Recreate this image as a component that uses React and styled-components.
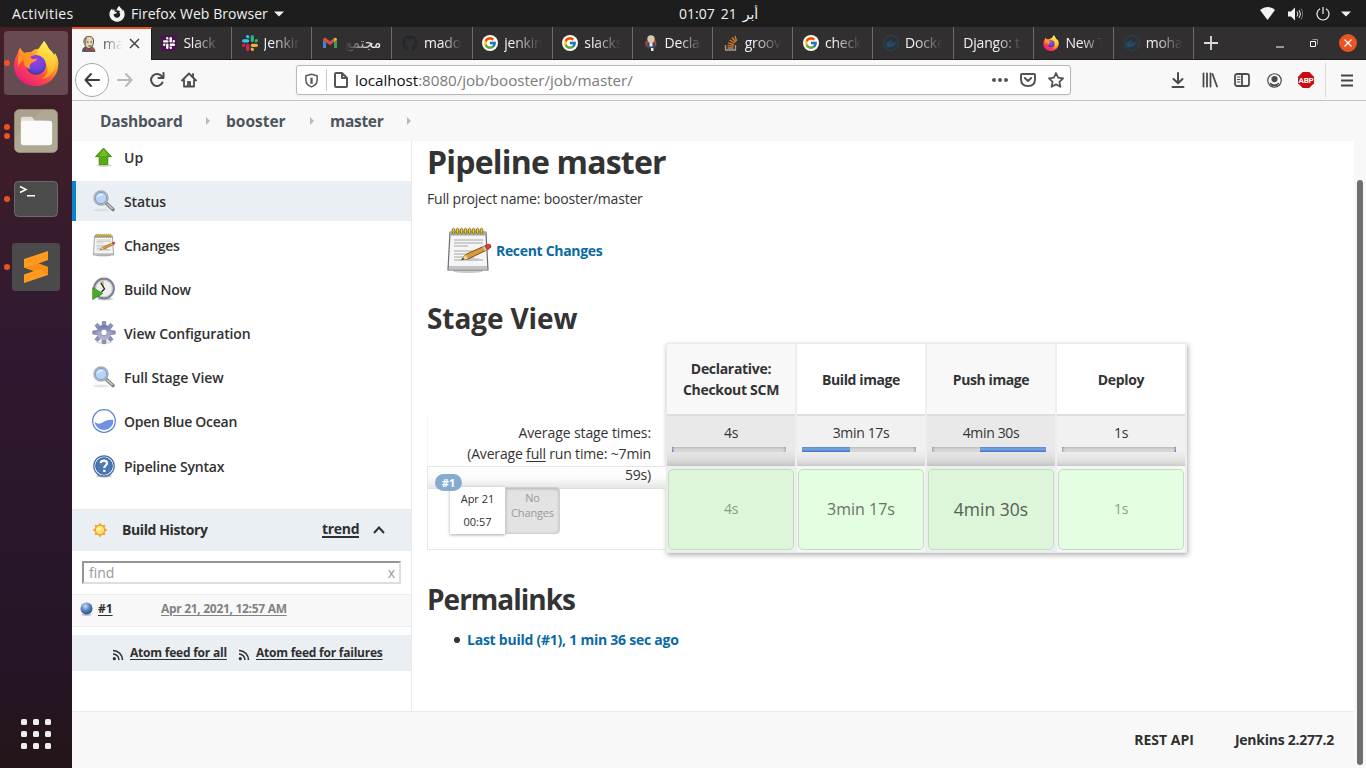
import React from "react";
import styled, { createGlobalStyle, css } from "styled-components";
import { FaFirefoxBrowser, FaGithub, FaDocker } from "react-icons/fa";
import { FcGoogle } from "react-icons/fc";

const GlobalStyle = createGlobalStyle`
  * { box-sizing: border-box; }
  body { margin: 0; background: #fff; font-family: "Open Sans", "Noto Sans", "DejaVu Sans", sans-serif; font-size: 14px; color: #333; }
  h1, h2, p, ul { margin: 0; padding: 0; }
  a { color: inherit; text-decoration: none; }
  svg { display: block; flex: none; }
`;

/* Letter spacing is tuned per label */
const tracking = css`
  letter-spacing: ${(p) => p.$ls || 0}px;
  white-space: nowrap;
`;

const Screen = styled.div`
  width: 1366px;
  height: 768px;
  overflow: hidden;
  display: flex;
  flex-direction: column;
`;

/* ---------- System bar ---------- */
const TopBar = styled.header`
  height: 27px;
  flex: none;
  background: #1d1d1d;
  color: #f2f2f2;
  display: grid;
  grid-template-columns: 679px 1fr auto;
  align-items: center;
  line-height: 26px;
`;
const TopLeft = styled.div`
  display: flex;
  align-items: center;
  padding-left: 12px;
`;
const TopLabel = styled.span`
  ${tracking}
  width: ${(p) => p.$w}px;
`;
const AppMenu = styled.div`
  display: flex;
  align-items: center;
  gap: 6px;
  margin-left: 35px;
`;
const Clock = styled.div`
  display: flex;
  gap: 6px;
`;
const Tray = styled.div`
  display: flex;
  align-items: center;
  gap: 13px;
  padding-right: 15px;
  svg:last-child { margin-left: -2px; }
`;

/* ---------- Dock ---------- */
const Desktop = styled.div`
  display: flex;
  flex: 1;
  min-height: 0;
`;
const DockBar = styled.nav`
  width: 72px;
  flex: none;
  background: linear-gradient(180deg, #431f26 0%, #3a1c2b 22%, #301930 42%, #29162b 70%, #251524 88%, #241519 100%);
  display: flex;
  flex-direction: column;
  gap: 4px;
  padding: 4px 4px 19px;
`;
const DockSlot = styled.div`
  height: 64px;
  display: grid;
  grid-template-columns: 6px 1fr 6px;
  align-items: center;
  justify-items: center;
  border-radius: 4px;
  background: ${(p) => (p.$active ? "rgba(255,255,255,0.2)" : "transparent")};
`;
const Dots = styled.div`
  display: flex;
  flex-direction: column;
  gap: 3px;
`;
const Dot = styled.i`
  width: 6px;
  height: 6px;
  border-radius: 50%;
  background: #e95420;
`;
const AppGrid = styled.div`
  margin-top: auto;
  align-self: center;
  display: grid;
  grid-template-columns: repeat(3, 6px);
  gap: 6px;
  i { width: 6px; height: 6px; border-radius: 1.5px; background: #eeeeec; }
`;

/* ---------- Browser ---------- */
const Browser = styled.div`
  flex: 1;
  min-width: 0;
  display: flex;
  flex-direction: column;
`;
const TabStrip = styled.div`
  height: 33px;
  flex: none;
  background: #322f30;
  border-bottom: 1px solid #1c1b1b;
  display: flex;
`;
const Tab = styled.div`
  width: ${(p) => (p.$active ? 79.8 : 80.2)}px;
  height: ${(p) => (p.$active ? 33 : 32)}px;
  flex: none;
  display: flex;
  align-items: center;
  padding: ${(p) => (p.$active ? "0 11px 2px 9px" : "0 10px 0 9.6px")};
  gap: 6px;
  background: ${(p) => (p.$active ? "#f8f8f8" : "transparent")};
  border-top: ${(p) => (p.$active ? "2px solid #e95420" : "0")};
  border-right: 1px solid ${(p) => (p.$active ? "#1c1b1b" : "#6d6b6c")};
  color: ${(p) => (p.$active ? "#4a4a4a" : "#f4f4f4")};
`;
const TabTitle = styled.span`
  ${tracking}
  flex: 1;
  min-width: 0;
  overflow: hidden;
  line-height: 24px;
  direction: ${(p) => (p.$rtl ? "rtl" : "ltr")};
  mask-image: linear-gradient(${(p) => (p.$rtl ? "270deg" : "90deg")}, #000 ${(p) => p.$solid || 25}%, transparent 98%);
`;
const NewTab = styled.div`
  width: 33px;
  display: grid;
  place-items: center;
`;
const WindowButtons = styled.div`
  margin-left: auto;
  display: flex;
  align-items: center;
  gap: 26px;
  padding-right: 9px;
  svg:last-child { margin-left: -5px; }
`;
const Toolbar = styled.div`
  height: 41px;
  flex: none;
  background: #f8f8f8;
  border-bottom: 1px solid #c3c3c3;
  display: flex;
  align-items: center;
  padding-left: 3px;
`;
const BackButton = styled.div`
  width: 34px;
  height: 34px;
  border-radius: 50%;
  border: 1px solid #aaa;
  background: #fff;
  display: grid;
  place-items: center;
`;
const ToolSlot = styled.div`
  width: 32px;
  height: 32px;
  display: grid;
  place-items: center;
  color: #4b4b4b;
`;
const ToolDivider = styled.i`
  width: 1px;
  height: 34px;
  margin: 0 5px 0 3px;
  background: #d9d9d9;
`;
const UrlBar = styled.div`
  width: 775px;
  height: 30px;
  margin: 0 91px;
  border: 1px solid #b8b8b8;
  border-radius: 3px;
  background: #fff;
  box-shadow: 0 1px 3px rgba(0, 0, 0, 0.06);
  display: flex;
  align-items: center;
  padding: 0 6px 0 7px;
`;
const UrlDivider = styled.i`
  width: 1px;
  height: 22px;
  margin: 0 6px 0 7px;
  background: #c8c8c8;
`;
const UrlText = styled.span`
  ${tracking}
  flex: 1;
  margin-left: 6px;
  font-size: 15.2px;
  color: #7b7b7b;
  b { font-weight: 400; color: #111; }
`;
const UrlActions = styled.div`
  display: flex;
  align-items: center;
  gap: 12px;
`;

/* ---------- Jenkins page ---------- */
const Page = styled.div`
  flex: 1;
  min-height: 0;
  display: flex;
  background: #f8f8f8;
`;
const PageColumn = styled.div`
  width: 1282px;
  display: flex;
  flex-direction: column;
`;
const ScrollTrack = styled.div`
  width: 12px;
  padding: 79px 3px 3px;
`;
const ScrollThumb = styled.div`
  height: 585px;
  width: 6px;
  border-radius: 3px;
  background: #6f6f6f;
`;
const Breadcrumbs = styled.div`
  height: 40px;
  flex: none;
  display: flex;
  align-items: center;
  padding-left: 28px;
`;
const Crumb = styled.a`
  ${tracking}
  width: ${(p) => p.$w}px;
  font-size: 15.5px;
  font-weight: 700;
  color: #4d545d;
`;
const CrumbArrow = styled.i`
  width: 0;
  height: 0;
  border: 4px solid transparent;
  border-left-color: #b9b9b9;
  border-right: 0;
  margin-right: ${(p) => p.$mr}px;
`;
const Body = styled.div`
  height: 570px;
  flex: none;
  display: flex;
  background: #fff;
`;
const Side = styled.aside`
  width: 340px;
  flex: none;
  border-right: 1px solid #eaeaea;
  overflow: hidden;
`;
const Tasks = styled.nav`
  margin-top: -4px;
  height: 372px;
  display: flex;
  flex-direction: column;
  gap: 4px;
`;
const Task = styled.a`
  ${tracking}
  height: 40px;
  flex: none;
  display: flex;
  align-items: center;
  gap: 8px;
  padding-left: 16px;
  border-left: 4px solid ${(p) => (p.$active ? "#0b84d0" : "transparent")};
  background: ${(p) => (p.$active ? "#e9eff2" : "transparent")};
  font-weight: 600;
  color: #303030;
  &:last-child { height: 42px; }
`;
const HistoryHead = styled.div`
  height: 42px;
  display: flex;
  align-items: center;
  padding: 0 0 3px 19px;
  background: #e9eff2;
  border-top: 1px solid #eaeaea;
  font-weight: 700;
  color: #303030;
  svg { margin-top: 1px; }
`;
const HistoryTitle = styled.span`
  ${tracking}
  width: 200px;
  margin-left: 13px;
`;
const Trend = styled.a`
  ${tracking}
  width: 37px;
  margin-right: 14px;
  border-bottom: 2px solid #303030;
  line-height: 15px;
  font-weight: 700;
`;
const Find = styled.div`
  height: 23px;
  margin: 10px;
  border: 2px solid;
  border-color: #959595 #dedede #dedede #959595;
  display: flex;
  align-items: center;
  justify-content: space-between;
  padding: 0 4px 1px 5px;
  color: #989898;
`;
const FindText = styled.span`
  ${tracking}
`;
const BuildRow = styled.div`
  height: 33px;
  display: flex;
  align-items: center;
  padding: 0 0 4px 8px;
  background: #f8f8f8;
  border: solid #e9eff2;
  border-width: 1px 0;
  font-size: 12px;
  font-weight: 700;
`;
const BuildLink = styled.a`
  ${tracking}
  width: ${(p) => (p.$w ? `${p.$w}px` : "auto")};
  margin-left: 5px;
  color: ${(p) => (p.$muted ? "#828282" : "#303030")};
  text-decoration: underline;
  text-underline-offset: 2px;
`;
const Feeds = styled.div`
  height: 36px;
  margin-top: 8px;
  display: flex;
  align-items: center;
  padding-left: 40px;
  background: #e9eff2;
  font-size: 12px;
  font-weight: 700;
  svg { margin-top: 3px; }
`;
const FeedLink = styled(BuildLink)`
  margin: 0 10px 1px 6px;
`;

const Main = styled.main`
  flex: 1;
  padding: 3px 0 0 15px;
`;
const Title = styled.h1`
  ${tracking}
  font-size: 32px;
  line-height: 36px;
  font-weight: 700;
`;
const Para = styled.p`
  ${tracking}
  margin-top: 9px;
  line-height: 20px;
`;
const Recent = styled.div`
  margin: 17px 0 0 18px;
  height: 48px;
  display: flex;
  align-items: center;
  gap: 3px;
`;
const BlueLink = styled.a`
  ${tracking}
  font-weight: 700;
  color: #0b6aa2;
`;
const Heading = styled.h2`
  ${tracking}
  margin-top: ${(p) => p.$mt}px;
  font-size: 28px;
  line-height: 34px;
  font-weight: 700;
`;
const StageView = styled.section`
  margin-top: 8px;
  height: 210px;
  display: flex;
`;
const RunColumn = styled.div`
  width: 239px;
  padding-top: 72px;
`;
const Averages = styled.div`
  position: relative;
  z-index: 1;
  height: 51px;
  padding: 7px 15px 0 0;
  text-align: right;
  line-height: 21px;
  border-left: 1px solid #f6f6f6;
  u { text-underline-offset: 2px; }
`;
const Line = styled.div`
  ${tracking}
`;
const RunCell = styled.div`
  position: relative;
  height: 84px;
  border: 1px solid #e6e6e6;
  border-right: 0;
  padding: 20px 0 0 22px;
  display: flex;
  background: linear-gradient(180deg, #fff 0, #fbfbfb 11px, #e6e6e6 21px, #d8d8d8 22px, transparent 22px);
`;
const RunBadge = styled.span`
  position: absolute;
  z-index: 2;
  left: 7px;
  top: 7px;
  width: 27px;
  height: 17px;
  border-radius: 9px;
  background: #86abd0;
  color: #fff;
  font-size: 11px;
  font-weight: 700;
  line-height: 17px;
  text-align: center;
`;
const RunDate = styled.div`
  width: 55px;
  height: 47px;
  background: #fff;
  box-shadow: 0 1px 3px rgba(0, 0, 0, 0.35);
  font-size: 11px;
  line-height: 23px;
  text-align: center;
  color: #303030;
`;
const RunChanges = styled.div`
  ${tracking}
  width: 55px;
  height: 47px;
  border: 1px solid #cfcfcf;
  border-radius: 0 4px 4px 0;
  background: #e3e3e3;
  box-shadow: inset 0 1px 3px rgba(0, 0, 0, 0.22);
  font-size: 11px;
  line-height: 15px;
  padding-top: 2px;
  text-align: center;
  color: #999;
`;
const Stages = styled.div`
  width: 521px;
  height: 210px;
  border: 1px solid #e8ebec;
  border-right: 0;
  background: #efefef;
  box-shadow: 1px 2px 5px rgba(0, 0, 0, 0.32);
  display: grid;
  grid-template-columns: repeat(4, 130px);
`;
const Stage = styled.div`
  display: flex;
  flex-direction: column;
  border-right: 2px solid #eee;
`;
const StageName = styled.div`
  height: 72px;
  border-bottom: 2px solid #dedede;
  background: ${(p) => (p.$odd ? "#f8f8f8" : "#fff")};
  display: grid;
  place-content: center;
  text-align: center;
  line-height: 21px;
  font-weight: 700;
`;
const StageAverage = styled.div`
  height: 50px;
  background: linear-gradient(180deg, transparent 34px, rgba(0, 0, 0, 0.06) 44px, rgba(0, 0, 0, 0.16) 50px), ${(p) => (p.$odd ? "#e9e9e9" : "#f1f1f1")};
  padding: 7px 9px 0 5px;
  text-align: center;
`;
const StageTime = styled.div`
  ${tracking}
  line-height: 20px;
  padding-left: 4px;
`;
const Meter = styled.div`
  display: flex;
  height: 5px;
  margin-top: 4px;
  background: linear-gradient(90deg, rgba(0,0,0,0.2), transparent 3px, transparent 111px, rgba(0,0,0,0.2)), linear-gradient(180deg, #bcbcbc, #d6d6d6 50%);
`;
const MeterFill = styled.i`
  height: 5px;
  background: linear-gradient(180deg, #5f87cb, #7ba7dc 45%, #3d6fc9);
`;
const StageResult = styled.div`
  flex: 1;
  padding: 3px 1px 2px;
  background: ${(p) => (p.$odd ? "#e9f2e9" : "#f1f9f1")};
`;
const StageBox = styled.div`
  ${tracking}
  height: 81px;
  border: 1px solid #c9d6cc;
  border-radius: 5px;
  background: ${(p) => (p.$odd ? "#ddf6da" : "#e3fee1")};
  display: grid;
  place-content: center;
  padding-bottom: 2px;
  font-size: ${(p) => p.$size}px;
  color: ${(p) => p.$tone};
`;
const Links = styled.ul`
  list-style: none;
  margin: 14px 0 0 27px;
  li { display: flex; align-items: center; gap: 7px; line-height: 20px; }
  li::before { content: ""; width: 6px; height: 6px; border-radius: 50%; background: #333; }
`;
const Footer = styled.footer`
  flex: 1;
  border-top: 1px solid #eaeaea;
  display: flex;
  justify-content: flex-end;
  gap: 41px;
  padding: 18px 20px 0 0;
  font-weight: 700;
  line-height: 20px;
  color: #303030;
`;
const FooterLink = styled.a`
  ${tracking}
`;

/* ---------- Icons ---------- */
const Firefox = ({ size, id }) => (
  <svg width={size} height={size} viewBox="0 0 46 46">
    <defs>
      <linearGradient id={`${id}a`} x1="0.85" y1="0.1" x2="0.25" y2="0.95">
        <stop offset="0" stopColor="#fff44f" />
        <stop offset=".35" stopColor="#ffa42a" />
        <stop offset=".65" stopColor="#ff4a45" />
        <stop offset="1" stopColor="#e81e7a" />
      </linearGradient>
      <radialGradient id={`${id}b`} cx=".5" cy=".3" r=".75">
        <stop offset="0" stopColor="#a43be8" />
        <stop offset=".55" stopColor="#6b45dd" />
        <stop offset="1" stopColor="#40309c" />
      </radialGradient>
      <linearGradient id={`${id}c`} x1=".6" y1="0" x2=".4" y2="1">
        <stop offset="0" stopColor="#fff25a" />
        <stop offset=".6" stopColor="#ffc52e" />
        <stop offset="1" stopColor="#ff9328" />
      </linearGradient>
    </defs>
    <path fill={`url(#${id}a)`} d="M7 8c1 1 2 3 4 5 3-1 5-1 7-1 3-3 7-4 10-3 1-4 3-7 3-8 3 3 4 7 6 9 2 1 3 3 4 5l1-2c3 5 4 9 3 14-1 11-11 19-22 19C10 46 1 37 1 25c0-5 2-9 4-12 0-2 1-4 2-5z" />
    <path fill={`url(#${id}c)`} d="M31 1c3 3 4 7 6 9 4 4 7 10 5 17-2 8-8 12-14 12 7-3 8-10 5-15-2-4-7-5-9-8-1-6 4-10 7-15z" />
    <circle fill={`url(#${id}b)`} cx="23" cy="25" r="10" />
    <path fill="#ff9425" d="M7 8c1 1 2 3 4 5 3-1 6-1 8 0-2 2-2 4-1 5 2 2 6 0 6 1-1 3-6 3-7 6-1 2 0 3 0 4-4-1-7-5-6-9-3 1-5 4-6 7 0-6 0-12 2-19z" />
  </svg>
);
const FilesIcon = () => (
  <svg width="44" height="44" viewBox="0 0 45 45">
    <rect x=".5" y=".5" width="44" height="44" rx="5" fill="#a9a18c" stroke="#8e8773" />
    <path d="M1 29 29 1h10q5 0 5 5v33q0 5-5 5H6q-5 0-5-5z" fill="#b4ad9a" opacity=".6" />
    <path d="M7 10q0-2 2-2h8q2 0 3 2l1 2h10v4H7z" fill="#e3dfd4" />
    <rect x="7" y="12" width="32" height="25" rx="2.5" fill="#fafafa" />
  </svg>
);
const TerminalIcon = () => (
  <svg width="44" height="36" viewBox="0 0 44 36">
    <rect x=".5" y=".5" width="43" height="35" rx="4" fill="#4b4b4b" stroke="#6e6a6c" />
    <path d="m6 5.500 6 3-6 3M13 14.700h8" stroke="#fff" strokeWidth="1.500" fill="none" />
  </svg>
);
const SublimeIcon = () => (
  <svg width="48" height="48" viewBox="0 0 48 48">
    <rect width="48" height="48" rx="3" fill="#4a4a4a" />
    <path d="M36 8v9l-9.500 3.500L36 24v8L12 40v-8.500l10-3.500-10-3.500V16z" fill="#ff9a1f" />
    <path d="m22 28 5-1.500L36 31.500V24l-9.500-3.500L12 24.500z" fill="#f78f17" />
  </svg>
);
const SlackIcon = ({ c = ["#36c5f0", "#2eb67d", "#ecb22e", "#e01e5a"], size = 16 }) => (
  <svg width={size} height={size} viewBox="0 0 16 16">
    <g fill={c[0]}><rect x="0" y="4.2" width="7.2" height="3.2" rx="1.6" /><path d="M7.2 3.2H5.6A1.6 1.6 0 1 1 7.2 1.6z" /></g>
    <g fill={c[1]}><rect x="8.7" y="0" width="3.2" height="7.2" rx="1.6" /><path d="M12.8 7.3V5.7a1.6 1.6 0 1 1 1.6 1.6z" /></g>
    <g fill={c[2]}><rect x="8.8" y="8.7" width="7.2" height="3.2" rx="1.6" /><path d="M8.8 12.8h1.6a1.6 1.6 0 1 1-1.6 1.6z" /></g>
    <g fill={c[3]}><rect x="4.1" y="8.8" width="3.2" height="7.2" rx="1.6" /><path d="M3.2 8.7v1.6a1.6 1.6 0 1 1-1.6-1.6z" /></g>
  </svg>
);
const SlackBox = () => (
  <svg width="16" height="16" viewBox="0 0 16 16">
    <rect width="16" height="16" fill="#4a154b" />
    <svg x="2" y="2" width="12" height="12" viewBox="0 0 16 16"><SlackIcon c={["#fff", "#fff", "#fff", "#fff"]} /></svg>
  </svg>
);
const GmailIcon = () => (
  <svg width="16" height="16" viewBox="0 0 16 16">
    <path d="M1 13V5l3 2v6z" fill="#4a7fd6" />
    <path d="M12 13V7l3-2v8z" fill="#3f9a58" />
    <path d="M1 5c0-2 2-2.6 3-1.800l4 3 4-3V7l-4 3.200L1 5z" fill="#d2503f" />
    <path d="M12 7V3.200C13.500 2.200 15 3.200 15 5z" fill="#e3b12c" />
  </svg>
);
const JenkinsIcon = () => (
  <svg width="16" height="16" viewBox="0 0 16 16">
    <path d="M1.500 15.500c0-3 1-4.500 3.500-4.500h4c3 0 4.500 1 5 4.500z" fill="#4a5866" stroke="#333" strokeWidth=".6" />
    <path d="M3 5c0-3 2.500-5 5.200-4.700C11.500.5 13 3 12.500 6.500c-.3 3-2 6-4.500 6S3.500 9 3 5z" fill="#ecd3b0" stroke="#4a3c33" strokeWidth=".9" />
    <path d="M2.500 7c-.500-3 1-6.300 4-6.800L5.500 4l-.5 5z" fill="#8f8579" />
    <path d="M6 6h1.500M9.500 6H11M7.500 10h3" stroke="#333" strokeWidth="1" />
    <path d="m8 13 5-1.500v3.500zM8 13l-3-1v3z" fill="#c4453b" />
  </svg>
);
const ButlerIcon = () => (
  <svg width="16" height="16" viewBox="0 0 16 16">
    <path d="M2.500 6c-1 4 0 6 3.500 7h5c3-2 3-5 1.500-8z" fill="#9c4638" />
    <circle cx="8" cy="4" r="3.700" fill="#d8c9b0" />
    <path d="M5 8h6l1.500 5-4.500 1-4-1z" fill="#2f4a66" />
    <path d="M6.500 7.500h3v4h-3zM8 13h2.500v3H8z" fill="#e8e8e8" />
  </svg>
);
const StackIcon = () => (
  <svg width="16" height="16" viewBox="0 0 16 16" fill="none" strokeWidth="1.300">
    <path d="M2.500 10v5h10v-5" stroke="#9b9da0" />
    <path d="M4.500 13h6M4.600 10.600l6 .6M5.200 7.800l5.700 1.800M6.700 5l5 3M9 2.500l3.800 4.500M12 1l1.600 5" stroke="#dd7d27" />
  </svg>
);
const Ring = styled.span`
  width: 16px;
  height: 16px;
  flex: none;
  border: 1px solid #1d4a66;
  border-radius: 50%;
  display: grid;
  place-items: center;
  color: #1d5070;
  font-size: 11px;
`;
const GoogleDisc = styled(Ring)`
  background: #fff;
  border: 0;
  font-size: 14px;
`;
const Docker = () => <Ring><FaDocker /></Ring>;
const Google = () => <GoogleDisc><FcGoogle /></GoogleDisc>;

const Stroke = ({ s = 16, w = 2, children, c = "currentColor" }) => (
  <svg width={s} height={s} viewBox="0 0 16 16" fill="none" stroke={c} strokeWidth={w} strokeLinecap="round" strokeLinejoin="round">{children}</svg>
);

const Magnifier = () => (
  <svg width="24" height="24" viewBox="0 0 24 24">
    <ellipse cx="9" cy="21" rx="8" ry="1.500" fill="#d8d8d8" opacity=".7" />
    <path d="m14.500 14.500 6.500 6" stroke="#808080" strokeWidth="3.600" strokeLinecap="round" />
    <path d="m15 15 5.500 5" stroke="#d0d0d0" strokeWidth="1.300" />
    <circle cx="9" cy="9" r="7" fill="#b9d3f3" stroke="#a9acb0" strokeWidth="1.400" />
    <circle cx="9" cy="9" r="5.700" fill="none" stroke="#7b9fd4" strokeWidth="1" />
    <path d="M5 9c0-4 5-5 7-3-3 0-5 1-7 3z" fill="#e5effb" />
  </svg>
);
const Notepad = ({ size = 24 }) => (
  <svg width={size} height={size} viewBox="0 0 48 48">
    <ellipse cx="23" cy="45" rx="15" ry="2" fill="#ccc" />
    <path d="M5 6h36l2 38H3z" fill="#f5f5f5" stroke="#6c6c6c" strokeWidth="1.200" strokeLinejoin="round" />
    <path d="M5 6h36v3.500H5z" fill="#a7a7a2" />
    <path d="M4 41h38M4 43h38" stroke="#b2b2b2" strokeWidth="1.300" />
    <path d="M9 14h29M9 17h29M9 20h14M9 25h19M9 28h12M9 31h20M9 34h8M29 34h9" stroke="#a7a7a7" />
    {[8, 12, 16, 20, 24, 28, 32, 36].map((x) => <ellipse key={x} cx={x + 0.500} cy="5" rx="1.400" ry="2.800" fill="#e5cf38" stroke="#87711a" strokeWidth="1" />)}
    <ellipse cx="26" cy="33.500" rx="10" ry="1.500" fill="#c4c4c4" />
    <path d="m16.500 34 4-5.500 19-8.500 2.500 4-19 9z" fill="#d79b3a" stroke="#7c551c" />
    <path d="m40 19.500 3-1.300q3-.2 3 2.800l-3.500 3z" fill="#e43b32" stroke="#943" />
    <path d="m38.500 20.500 2.500 4" stroke="#ccc" strokeWidth="2" />
    <path d="m16.500 34 4-5.500 2.500 4.500z" fill="#efd3a2" />
    <path d="m16.500 34 1.500-2.300 1.200 1.600z" fill="#222" />
  </svg>
);
const UpArrow = () => (
  <svg width="24" height="24" viewBox="0 0 24 24">
    <ellipse cx="12" cy="20.500" rx="8" ry="1.500" fill="#ccc" opacity=".7" />
    <path d="m11.500 3 8 8.700h-3.700v8H7.200v-8H3.500z" fill="#58aa0e" stroke="#3f8608" strokeWidth=".9" />
    <path d="m11.500 4.500 4.500 6-9 1z" fill="#7cc83a" opacity=".7" />
  </svg>
);
const ClockRun = () => (
  <svg width="24" height="24" viewBox="0 0 24 24">
    <ellipse cx="13" cy="22" rx="8" ry="1.500" fill="#ccc" />
    <circle cx="12" cy="11.500" r="9.800" fill="#efefec" stroke="#7c7d97" strokeWidth="2.200" />
    <circle cx="12" cy="11.500" r="8.300" fill="none" stroke="#c5c6d2" />
    <path d="M12 12V3.500a8.500 8.500 0 0 0-4.500 1.500z" fill="#d8c277" />
    <path d="m9 6 3.500 6-3 3" stroke="#222" strokeWidth="1.300" fill="none" />
    <path d="M.7 10.500v12l10-6z" fill="#4aab2b" stroke="#2f7c16" strokeWidth=".7" />
  </svg>
);
const Gear = () => (
  <svg width="24" height="24" viewBox="0 0 24 24">
    <defs><linearGradient id="gear" x1="0" y1="0" x2="0" y2="1"><stop offset="0" stopColor="#6279a8" /><stop offset=".5" stopColor="#a1a0c6" /><stop offset="1" stopColor="#bdb6d2" /></linearGradient></defs>
    <ellipse cx="12" cy="21.500" rx="8" ry="1.500" fill="#ddd" />
    <g fill="url(#gear)" stroke="#7e80a3" strokeWidth=".8" transform="translate(12 11.500)">
      {[0, 45, 90, 135, 180, 225, 270, 315].map((a) => <path key={a} transform={`rotate(${a})`} d="M-2-7-1.500-11.200H1.500L2-7z" fill="#8d93b8" />)}
      <circle r="7.600" stroke="none" />
      <circle r="3.300" fill="#fff" />
    </g>
  </svg>
);
const Ocean = () => (
  <svg width="24" height="24" viewBox="0 0 24 24">
    <circle cx="12" cy="12" r="11.300" fill="#fff" stroke="#5b80dd" strokeWidth="1.200" />
    <path d="M2.500 12.800c3 2.400 5.500 2.400 8.500.4s6.500-3.200 10.400-2.200A9.500 9.500 0 0 1 2.500 12.800z" fill="#6f92e2" />
  </svg>
);
const Help = () => (
  <svg width="24" height="24" viewBox="0 0 24 24">
    <ellipse cx="12" cy="22" rx="8" ry="1.500" fill="#bbb" />
    <circle cx="12" cy="12" r="10.200" fill="#fff" stroke="#426da8" strokeWidth="1.200" />
    <circle cx="12" cy="12" r="8.300" fill="#4b78b5" stroke="#335f9c" />
    <path d="M8.700 9.200C9 5.800 15 5.700 15 9.200c0 2.300-2.700 2.300-2.700 4.700M12.300 15.700v2.200" fill="none" stroke="#fff" strokeWidth="2.300" />
  </svg>
);
const Sun = () => (
  <svg width="18" height="18" viewBox="0 0 18 18">
    <g transform="translate(9 9)">
      {[0, 45, 90, 135, 180, 225, 270, 315].map((a) => <path key={a} transform={`rotate(${a})`} d="M-2-4.500 0-7.500 2-4.500z" fill="#f5a530" />)}
      <circle r="4.800" fill="#fde36a" stroke="#efa02d" strokeWidth="1.200" />
      <circle cx="-1" cy="-1" r="2" fill="#fff3b0" />
    </g>
  </svg>
);
const Ball = () => (
  <svg width="13" height="14" viewBox="0 0 13 14">
    <defs><radialGradient id="ball" cx=".4" cy=".3" r=".7"><stop offset="0" stopColor="#cfdcf0" /><stop offset=".5" stopColor="#6188c4" /><stop offset="1" stopColor="#244e91" /></radialGradient></defs>
    <ellipse cx="6.500" cy="12.800" rx="5" ry="1" fill="#bbb" />
    <circle cx="6.500" cy="6.500" r="6" fill="url(#ball)" />
  </svg>
);
const Feed = () => (
  <svg width="12" height="12" viewBox="0 0 12 12" fill="none" stroke="#303030" strokeWidth="1.600">
    <path d="M1 1.500a9.500 9.500 0 0 1 9.500 9.500M1 5a6 6 0 0 1 6 6" />
    <circle cx="2.300" cy="9.700" r=".8" fill="#303030" />
  </svg>
);
const Caret = ({ w }) => <svg width={w} height="6" viewBox="0 0 10 6"><path d="M0 .5h10L5 5.500z" fill="#f2f2f2" /></svg>;

/* ---------- Data ---------- */
const tabs = [
  { t: "Slack", i: <SlackBox /> },
  { t: "Jenkins", i: <SlackIcon />, ls: -0.1 },
  { t: "مجتمع", i: <GmailIcon />, rtl: true },
  { t: "madoxx", i: <FaGithub size={16} color="#23282d" />, solid: 50 },
  { t: "jenkins", i: <Google /> },
  { t: "slacksl", i: <Google />, ls: -0.1 },
  { t: "Declara", i: <ButlerIcon />, solid: 40 },
  { t: "groovy", i: <StackIcon /> },
  { t: "checkc", i: <Google /> },
  { t: "Docker", i: <Docker /> },
  { t: "Django: t", solid: 55 },
  { t: "New Ta", i: <Firefox size={16} id="fs" />, solid: 45 },
  { t: "moham", i: <Docker /> },
];
const tasks = [
  { t: "Up", i: <UpArrow /> },
  { t: "Status", i: <Magnifier />, active: true, ls: -0.1 },
  { t: "Changes", i: <Notepad />, ls: -0.25 },
  { t: "Build Now", i: <ClockRun />, ls: -0.3 },
  { t: "View Configuration", i: <Gear />, ls: -0.12 },
  { t: "Full Stage View", i: <Magnifier />, ls: -0.07 },
  { t: "Open Blue Ocean", i: <Ocean />, ls: -0.27 },
  { t: "Pipeline Syntax", i: <Help />, ls: -0.2 },
];
const stages = [
  { n: ["Declarative:", "Checkout SCM"], t: "4s", from: 0, len: 1, size: 14, tone: "#8a9a88", ls: -0.3 },
  { n: ["Build image"], t: "3min 17s", from: 0, len: 48, size: 16, tone: "#687467", ls: -0.4 },
  { n: ["Push image"], t: "4min 30s", from: 48, len: 66, size: 17.500, tone: "#566055", ls: -0.4 },
  { n: ["Deploy"], t: "1s", from: 113, len: 1, size: 14, tone: "#8c9f8b", ls: -0.3 },
];
const StageWord = styled.span`
  ${tracking}
`;
const dock = [
  { i: <Firefox size={46} id="fb" />, dots: 1, active: true },
  { i: <FilesIcon />, dots: 2 },
  { i: <TerminalIcon />, dots: 1 },
  { i: <SublimeIcon />, dots: 1 },
];

export default function App() {
  return (
    <Screen>
      <GlobalStyle />
      <TopBar>
        <TopLeft>
          <TopLabel $w={62} $ls={0.4}>Activities</TopLabel>
          <AppMenu>
            <FaFirefoxBrowser size={16} />
            <TopLabel $w={137} $ls={0.06}>Firefox Web Browser</TopLabel>
            <Caret w={10} />
          </AppMenu>
        </TopLeft>
        <Clock><span>01:07</span><span>21</span><span>أبر</span></Clock>
        <Tray>
          <svg width="15" height="13" viewBox="0 0 16 13" preserveAspectRatio="none"><path d="M0 3Q8-3 16 3L8 13z" fill="#f2f2f2" /></svg>
          <svg width="15" height="14" viewBox="0 0 15 14" fill="none" stroke="#f2f2f2"><path d="M0 4.500h3l4-4v13l-4-4H0z" fill="#f2f2f2" stroke="none" /><path d="M9 4.500q1.800 2.500 0 5M11 3q3 4 0 8" /><path d="M13 1.500q3.500 5.500 0 11" stroke="#777" /></svg>
          <svg width="14" height="14" viewBox="0 0 14 14" fill="none" stroke="#f2f2f2" strokeWidth="1.200"><path d="M4 1.800a6 6 0 1 0 6 0M7 0v7" /></svg>
          <Caret w={10} />
        </Tray>
      </TopBar>
      <Desktop>
        <DockBar>
          {dock.map((d, k) => (
            <DockSlot key={k} $active={d.active}>
              <Dots>{Array.from({ length: d.dots }, (_, n) => <Dot key={n} />)}</Dots>
              {d.i}
            </DockSlot>
          ))}
          <AppGrid>{Array.from({ length: 9 }, (_, n) => <i key={n} />)}</AppGrid>
        </DockBar>
        <Browser>
          <TabStrip>
            <Tab $active>
              <JenkinsIcon />
              <TabTitle $solid={1}>ma</TabTitle>
              <svg width="11" height="11" viewBox="0 0 11 11"><path d="m1 1 9 9M10 1l-9 9" stroke="#444" strokeWidth="1.500" /></svg>
            </Tab>
            {tabs.map((t, k) => (
              <Tab key={k}>
                {t.i}
                <TabTitle $rtl={t.rtl} $solid={t.solid} $ls={t.ls ?? -0.2}>{t.t}</TabTitle>
              </Tab>
            ))}
            <NewTab><svg width="14" height="14" viewBox="0 0 14 14"><path d="M7 0v14M0 7h14" stroke="#ddd" strokeWidth="1.800" /></svg></NewTab>
            <WindowButtons>
              <svg width="8" height="9" viewBox="0 0 8 9"><path d="M0 8h8" stroke="#fff" /></svg>
              <svg width="8" height="8" viewBox="0 0 8 8" fill="none"><path d="M.5 2.500h5v5h-5z" stroke="#fff" /><path d="M2.500.5h5v5" stroke="#999" /></svg>
              <svg width="18" height="18" viewBox="0 0 18 18"><circle cx="9" cy="9" r="9" fill="#e95420" /><path d="m5.500 5.500 7 7M12.500 5.500l-7 7" stroke="#fff" strokeWidth="1.200" /></svg>
            </WindowButtons>
          </TabStrip>
          <Toolbar>
            <BackButton><Stroke c="#3c3c3c"><path d="M15 8H1.500M7 2 1.500 8 7 14" /></Stroke></BackButton>
            <ToolSlot><Stroke c="#bababa"><path d="M1 8h13.500M9 2l5.500 6L9 14" /></Stroke></ToolSlot>
            <ToolSlot><Stroke><path d="M13.500 10.500a6 6 0 1 1-.5-6M14.500 1v5h-5" /></Stroke></ToolSlot>
            <ToolSlot><Stroke w={1.800}><path d="M1 8.500 8 1.500l7 7M3 8v6.500h10V8M12 2v3" /><path d="M7 14v-4h2v4" /></Stroke></ToolSlot>
            <UrlBar>
              <Stroke s={15} c="#5b5b5b" w={1.600}><path d="M8 1.300 14 3v4.500c0 4-3 6.300-6 7.300-3-1-6-3.300-6-7.300V3z" /><path d="M8 5v6.500" strokeWidth="2.500" strokeLinecap="butt" /></Stroke>
              <UrlDivider />
              <Stroke s={16} c="#555"><path d="M2 2q0-1 1-1h6l5 5v8q0 1-1 1H3q-1 0-1-1zM9 1v5h5" /></Stroke>
              <UrlText $ls={-0.05}><b>localhost</b>:8080/job/booster/job/master/</UrlText>
              <UrlActions>
                <svg width="16" height="4" viewBox="0 0 16 4" fill="#555"><circle cx="2" cy="2" r="2" /><circle cx="8" cy="2" r="2" /><circle cx="14" cy="2" r="2" /></svg>
                <Stroke c="#555"><path d="M1 3q0-1 1-1h12q1 0 1 1v4q0 7-7 7T1 7z" /><path d="m4.800 6 3.200 3 3.200-3" /></Stroke>
                <Stroke c="#555" w={1.800}><path d="m8 1 2.100 4.700 5 .6-3.700 3.500 1 5L8 12.400l-4.400 2.400 1-5L1 6.300l4.900-.6z" /></Stroke>
              </UrlActions>
            </UrlBar>
            <ToolSlot><Stroke><path d="M8 1v9.500M3.500 7 8 11.200 12.500 7M2.500 15h11" /></Stroke></ToolSlot>
            <ToolSlot><Stroke w={1.800}><path d="M1.500 1.500v13M5 1.500v13M8.500 1.500v13M10.500 2 15 14.500" /></Stroke></ToolSlot>
            <ToolSlot><Stroke w={1.800}><rect x="1" y="2" width="14" height="12" rx="2" /><path d="M8 2v12" /><path d="M3.500 5H6M3.500 7.500H6M3.500 10H6" strokeWidth="1" /></Stroke></ToolSlot>
            <ToolSlot><Stroke w={1.300} s={15}><circle cx="8" cy="8" r="7.200" /><circle cx="8" cy="6.500" r="2.700" fill="currentColor" /><path d="M3.500 11q4.500 4 9 0-1.500 2.800-4.500 2.800T3.500 11z" fill="currentColor" /></Stroke></ToolSlot>
            <ToolSlot>
              <svg width="16" height="16" viewBox="0 0 16 16"><path d="M4.700 0h6.600L16 4.700v6.600L11.300 16H4.700L0 11.300V4.700z" fill="#c70d0d" /><text x="8" y="10.900" textAnchor="middle" fontSize="8" fontWeight="700" fontFamily="Roboto" letterSpacing="-.2" fill="#fff">ABP</text></svg>
            </ToolSlot>
            <ToolDivider />
            <ToolSlot><svg width="12" height="13" viewBox="0 0 12 13"><path d="M0 1.500h12M0 6.500h12M0 11.500h12" stroke="#444" strokeWidth="2" /></svg></ToolSlot>
          </Toolbar>
          <Page>
            <PageColumn>
              <Breadcrumbs>
                <Crumb $w={106} $ls={-0.2}>Dashboard</Crumb><CrumbArrow $mr={16} />
                <Crumb $w={84}>booster</Crumb><CrumbArrow $mr={16} />
                <Crumb $w={77} $ls={-0.3}>master</Crumb><CrumbArrow $mr={0} />
              </Breadcrumbs>
              <Body>
                <Side>
                  <Tasks>{tasks.map((t) => <Task key={t.t} $active={t.active} $ls={t.ls}>{t.i}{t.t}</Task>)}</Tasks>
                  <HistoryHead>
                    <Sun />
                    <HistoryTitle $ls={-0.4}>Build History</HistoryTitle>
                    <Trend $ls={-0.3}>trend</Trend>
                    <svg width="12" height="8" viewBox="0 0 12 8"><path d="m1 7 5-5.500L11 7" stroke="#303030" strokeWidth="2" fill="none" /></svg>
                  </HistoryHead>
                  <Find><FindText>find</FindText><FindText>x</FindText></Find>
                  <BuildRow>
                    <Ball />
                    <BuildLink $w={58}>#1</BuildLink>
                    <BuildLink $muted $ls={-0.3}>Apr 21, 2021, 12:57 AM</BuildLink>
                  </BuildRow>
                  <Feeds>
                    <Feed /><FeedLink $w={98} $ls={-0.22}>Atom feed for all</FeedLink>
                    <Feed /><FeedLink $ls={-0.23}>Atom feed for failures</FeedLink>
                  </Feeds>
                </Side>
                <Main>
                  <Title $ls={-0.8}>Pipeline master</Title>
                  <Para $ls={-0.2}>Full project name: booster/master</Para>
                  <Recent><Notepad size={48} /><BlueLink $ls={-0.32}>Recent Changes</BlueLink></Recent>
                  <Heading $mt={27} $ls={-0.1}>Stage View</Heading>
                  <StageView>
                    <RunColumn>
                      <Averages>
                        <Line $ls={-0.1}>Average stage times:</Line>
                        <Line $ls={-0.17}>(Average <u>full</u> run time: ~7min</Line>
                        <Line $ls={-0.2}>59s)</Line>
                      </Averages>
                      <RunCell>
                        <RunDate>Apr 21<br />00:57</RunDate>
                        <RunChanges $ls={-0.15}>No<br />Changes</RunChanges>
                        <RunBadge>#1</RunBadge>
                      </RunCell>
                    </RunColumn>
                    <Stages>
                      {stages.map((s, k) => {
                        const odd = k % 2 === 0;
                        return (
                          <Stage key={k}>
                            <StageName $odd={odd}>{s.n.map((l) => <StageWord key={l} $ls={s.ls}>{l}</StageWord>)}</StageName>
                            <StageAverage $odd={odd}>
                              <StageTime $ls={-0.35}>{s.t}</StageTime>
                              <Meter><MeterFill style={{ marginLeft: s.from, width: s.len }} /></Meter>
                            </StageAverage>
                            <StageResult $odd={odd}><StageBox $odd={odd} $size={s.size} $tone={s.tone} $ls={s.size === 14 ? -0.3 : 0}>{s.t}</StageBox></StageResult>
                          </Stage>
                        );
                      })}
                    </Stages>
                  </StageView>
                  <Heading $mt={29} $ls={-1}>Permalinks</Heading>
                  <Links><li><BlueLink $ls={-0.24}>Last build (#1), 1 min 36 sec ago</BlueLink></li></Links>
                </Main>
              </Body>
              <Footer><FooterLink>REST API</FooterLink><FooterLink $ls={-0.25}>Jenkins 2.277.2</FooterLink></Footer>
            </PageColumn>
            <ScrollTrack><ScrollThumb /></ScrollTrack>
          </Page>
        </Browser>
      </Desktop>
    </Screen>
  );
}
